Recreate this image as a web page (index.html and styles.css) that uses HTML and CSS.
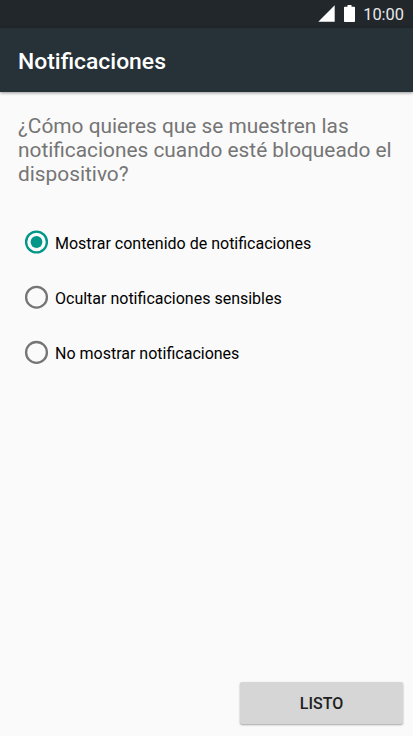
FILE: index.html
```html
<!DOCTYPE html>
<html lang="es">
<head>
<meta charset="utf-8">
<title>Notificaciones</title>
<link rel="stylesheet" href="styles.css">
</head>
<body>
<div class="status">
<svg class="signal" width="17" height="17" viewBox="0 0 17 17"><path d="M.3 16.7L16.7 .3V16.7Z"/></svg>
<svg class="battery" width="11" height="17" viewBox="0 0 11 17"><path d="M3.5 0H7.5V1.7H10.2Q11 1.7 11 2.5V16.2Q11 17 10.2 17H.8Q0 17 0 16.2V2.5Q0 1.7 .8 1.7H3.5Z"/></svg>
<span class="clock">10:00</span>
</div>
<header class="appbar"><h1>Notificaciones</h1></header>
<main>
<p class="question">¿Cómo quieres que se muestren las<br>notificaciones cuando esté bloqueado el<br>dispositivo?</p>
<div class="options">
<div class="option selected"><svg class="radio" width="24" height="24" viewBox="0 0 24 24"><circle class="ring" cx="11.5" cy="12" r="10.4"/><circle class="dot" cx="11.5" cy="12" r="5.9"/></svg><span class="label">Mostrar contenido de notificaciones</span></div>
<div class="option"><svg class="radio" width="24" height="24" viewBox="0 0 24 24"><circle class="ring" cx="11.5" cy="12.2" r="10.4"/></svg><span class="label">Ocultar notificaciones sensibles</span></div>
<div class="option"><svg class="radio" width="24" height="24" viewBox="0 0 24 24"><circle class="ring" cx="11.5" cy="12.4" r="10.4"/></svg><span class="label">No mostrar notificaciones</span></div>
</div>
</main>
<footer><button class="done">LISTO</button></footer>
</body>
</html>
```
FILE: styles.css
```css
* { box-sizing: border-box; }
body { margin: 0; height: 736px; display: flex; flex-direction: column; background: #fafafa; font-family: Roboto, sans-serif; overflow: hidden; }
.status { height: 28px; flex: none; background: #21272b; display: flex; justify-content: flex-end; align-items: flex-start; padding: 5px 9px 0 0; color: #e9eaeb; }
.status svg { fill: #fff; }
.battery { margin: 0 8px 0 9px; }
.clock { font-size: 16.4px; line-height: 20px; }
.appbar { height: 64px; flex: none; background: #263238; color: #fff; padding-left: 18px; display: flex; align-items: center; box-shadow: 0 1px 3px rgba(0,0,0,.4); }
h1 { margin: 4px 0 0; font-size: 22.9px; line-height: 26px; font-weight: 500; }
main { flex: 1; }
.question { margin: 22px 0 0 18px; font-size: 20.85px; line-height: 24px; color: #757575; white-space: nowrap; }
.options { margin: 29px 0 0 25px; }
.option { height: 55px; display: flex; align-items: center; gap: 6px; }
.radio { margin-top: -1px; overflow: visible; fill: none; stroke: #757575; stroke-width: 2.3; }
.selected .ring { stroke: #009688; }
.radio .dot { fill: #009688; stroke: none; }
.label { font-size: 16px; color: #000; padding-top: 2px; }
footer { display: flex; justify-content: flex-end; padding: 0 10px 12px 0; }
.done { width: 163px; height: 42px; border: 0; border-radius: 2px; background: #d6d6d6; color: #212121; font: 500 16px Roboto, sans-serif; box-shadow: 0 1px 2px rgba(0,0,0,.35); }
```
